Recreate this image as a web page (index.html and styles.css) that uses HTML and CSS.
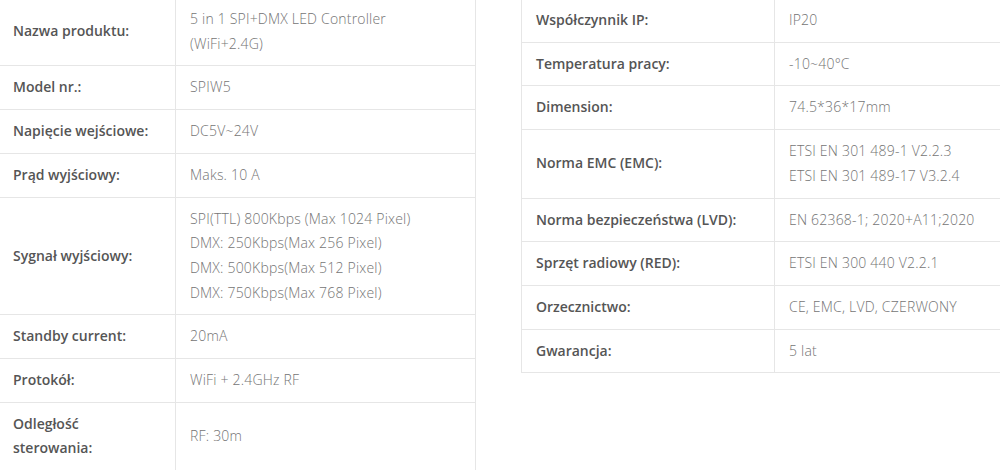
FILE: index.html
```html
<!DOCTYPE html>
<html lang="pl">
<head>
<meta charset="utf-8">
<link rel="stylesheet" href="styles.css">
</head>
<body>
<div class="page">
  <table class="spec spec-left">
    <tr><th>Nazwa produktu:</th><td>5 in 1 SPI+DMX LED Controller<br>(WiFi+2.4G)</td></tr>
    <tr><th>Model nr.:</th><td>SPIW5</td></tr>
    <tr><th>Napięcie wejściowe:</th><td>DC5V~24V</td></tr>
    <tr><th>Prąd wyjściowy:</th><td>Maks. 10 A</td></tr>
    <tr><th>Sygnał wyjściowy:</th><td>SPI(TTL) 800Kbps (Max 1024 Pixel)<br>DMX: 250Kbps(Max 256 Pixel)<br>DMX: 500Kbps(Max 512 Pixel)<br>DMX: 750Kbps(Max 768 Pixel)</td></tr>
    <tr><th>Standby current:</th><td>20mA</td></tr>
    <tr><th>Protokół:</th><td>WiFi + 2.4GHz RF</td></tr>
    <tr><th>Odległość<br>sterowania:</th><td>RF: 30m</td></tr>
  </table>
  <table class="spec spec-right">
    <tr><th>Współczynnik IP:</th><td>IP20</td></tr>
    <tr><th>Temperatura pracy:</th><td>-10~40°C</td></tr>
    <tr><th>Dimension:</th><td>74.5*36*17mm</td></tr>
    <tr><th>Norma EMC (EMC):</th><td>ETSI EN 301 489-1 V2.2.3<br>ETSI EN 301 489-17 V3.2.4</td></tr>
    <tr><th>Norma bezpieczeństwa (LVD):</th><td>EN 62368-1; 2020+A11;2020</td></tr>
    <tr><th>Sprzęt radiowy (RED):</th><td>ETSI EN 300 440 V2.2.1</td></tr>
    <tr><th>Orzecznictwo:</th><td>CE, EMC, LVD, CZERWONY</td></tr>
    <tr><th>Gwarancja:</th><td>5 lat</td></tr>
  </table>
</div>
</body>
</html>
```

FILE: styles.css
```css
html, body {
  margin: 0;
  padding: 0;
  background: #ffffff;
  overflow: hidden;
}

.page {
  display: flex;
  align-items: flex-start;
  gap: 45px;
  margin-top: -3px;
  margin-left: -2px;
  font-family: "Open Sans", "Liberation Sans", sans-serif;
  font-size: 14px;
  line-height: 24.7px;
}

.spec {
  border-collapse: collapse;
  flex: none;
}

.spec-left {
  width: 478px;
}

.spec-right {
  width: 482px;
  margin-top: 1px;
}

.spec th,
.spec td {
  border: 1px solid #e6e6e6;
  padding: 9px 14px;
  vertical-align: middle;
  text-align: left;
}

.spec th {
  font-weight: 600;
  color: #555555;
}

.spec td {
  font-weight: 300;
  color: #747474;
  letter-spacing: 0.2px;
}

.spec-left th {
  width: 148px;
}

.spec-right th {
  width: 224px;
}
```
